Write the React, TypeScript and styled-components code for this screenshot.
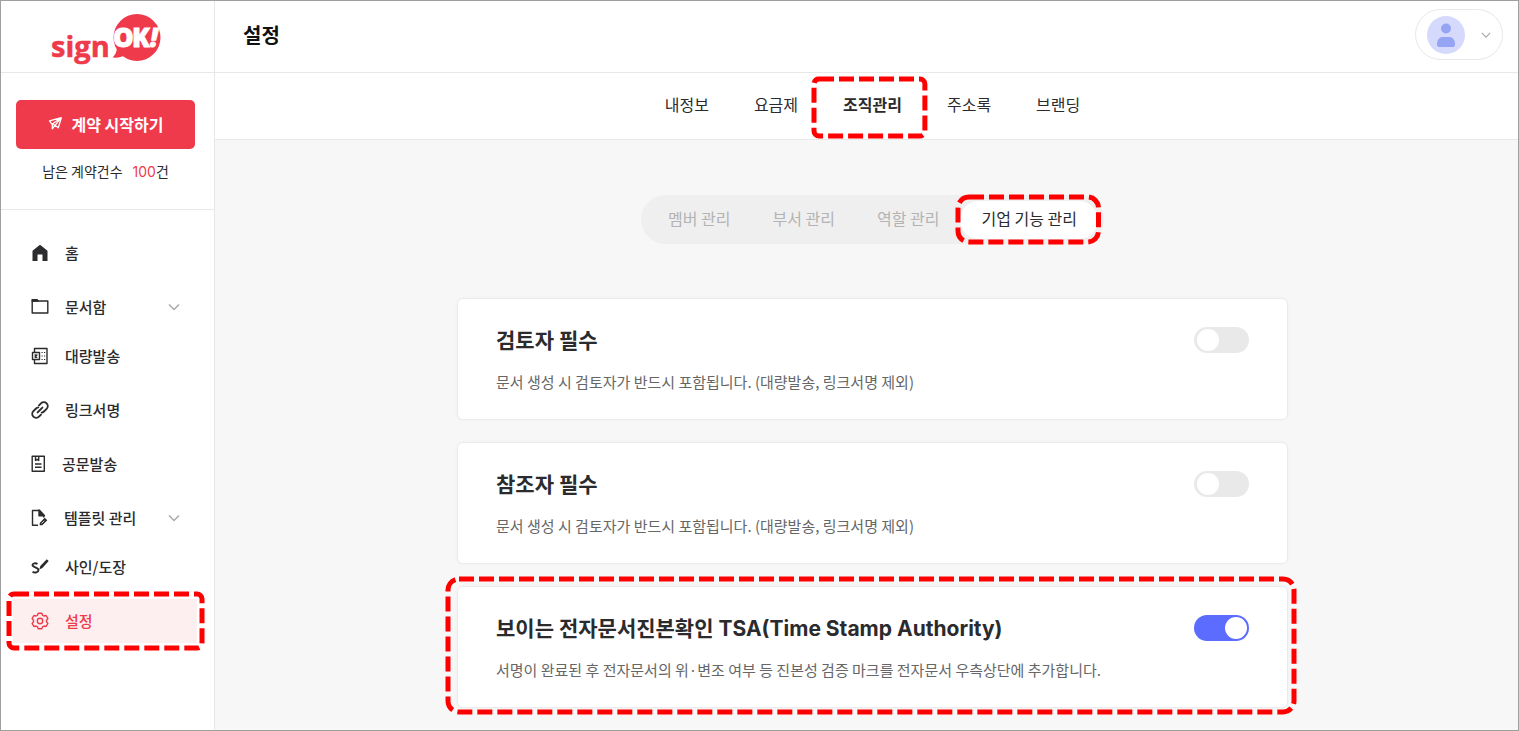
import React, { useState } from "react";
import styled, { createGlobalStyle, css } from "styled-components";

const RED = "#ef3a4b";
const INK = "#2b2b2d";
const LINE = "#e8e8e8";
const KR = '"Noto Sans CJK KR", "Noto Sans", sans-serif';
const MIXED = 'Inter, "Noto Sans CJK KR", sans-serif';

const GlobalStyle = createGlobalStyle`
  *, *::before, *::after { box-sizing: border-box; }
  body { margin: 0; font-family: ${KR}; font-size: 15px; color: ${INK}; background: #fff; }
  button, input { font-family: inherit; }
  button { border: 0; padding: 0; background: none; color: inherit; cursor: pointer; }
  a { color: inherit; text-decoration: none; }
  h1, h2, p, ul { margin: 0; padding: 0; }
  ul { list-style: none; }
  svg { display: block; }
`;

const Page = styled.div`
  display: flex;
  min-height: 100vh;
  border: 1px solid #9f9f9f;
  background: #fff;
`;

const Sidebar = styled.aside`
  flex: none;
  width: 214px;
  border-right: 1px solid ${LINE};
`;

const LogoLink = styled.a`
  display: flex;
  justify-content: center;
  align-items: center;
  height: 72px;
  padding: 2px 4px 0 0;
  border-bottom: 1px solid ${LINE};
`;

const StartPanel = styled.div`
  height: 137px;
  padding: 27px 19px 0 15px;
  border-bottom: 1px solid ${LINE};
`;

const StartButton = styled.button`
  display: flex;
  align-items: center;
  justify-content: center;
  gap: 9px;
  width: 100%;
  height: 49px;
  padding-bottom: 2px;
  border-radius: 5px;
  background: ${RED};
  color: #fff;
  font-size: 16px;
  line-height: 24px;
  font-weight: 700;
`;

const Remaining = styled.p`
  display: flex;
  justify-content: center;
  align-items: baseline;
  gap: 10px;
  margin-top: 12px;
  font-size: 14px;
  line-height: 20px;
`;

const Count = styled.span`
  font-family: ${MIXED};
  em { font-style: normal; color: ${RED}; }
`;

const Menu = styled.ul`
  display: flex;
  flex-direction: column;
  gap: 10px;
  padding: 21px 17px 0 12px;
`;

const MenuEntry = styled.li<{ $group?: boolean }>`
  position: relative;
  margin-bottom: ${(p) => (p.$group ? "-5px" : "0")};
`;

const MenuLink = styled.a<{ $active?: boolean }>`
  display: flex;
  align-items: center;
  gap: 16px;
  height: 44px;
  padding: 0 17px 0 18px;
  font-size: 15px;
  line-height: 22px;
  font-weight: 500;
  ${(p) => p.$active && css`background: #fdeff0; color: ${RED};`}
`;

const MenuText = styled.span`
  flex: 1;
`;

const Content = styled.div`
  flex: 1;
  min-width: 0;
  display: flex;
  flex-direction: column;
`;

const TopBar = styled.header`
  display: flex;
  align-items: center;
  justify-content: space-between;
  height: 72px;
  padding: 0 15px 4px 28px;
  border-bottom: 1px solid ${LINE};
`;

const PageTitle = styled.h1`
  font-size: 20px;
  line-height: 28px;
  font-weight: 700;
  color: #111;
`;

const Profile = styled.button`
  display: flex;
  align-items: center;
  justify-content: space-between;
  width: 88px;
  height: 51px;
  padding: 0 11px;
  border: 1px solid ${LINE};
  border-radius: 26px;
`;

const Tabs = styled.nav`
  display: flex;
  justify-content: center;
  align-items: center;
  gap: 45px;
  height: 67px;
  padding: 0 0 4px 12px;
  border-bottom: 1px solid ${LINE};
`;

const Tab = styled.a<{ $active?: boolean }>`
  position: relative;
  font-size: 16px;
  line-height: 24px;
  font-weight: ${(p) => (p.$active ? 700 : 400)};
`;

const Body = styled.main`
  flex: 1;
  display: flex;
  flex-direction: column;
  align-items: center;
  padding: 55px 18px 22px 30px;
  background: #f7f7f7;
`;

const Segments = styled.div`
  display: flex;
  align-items: center;
  height: 49px;
  padding: 0 6px;
  border-radius: 25px;
  background: #efefef;
`;

const Segment = styled.button<{ $active?: boolean }>`
  position: relative;
  height: 38px;
  padding: 0 21px 4px;
  border-radius: 19px;
  font-size: 16px;
  line-height: 24px;
  color: #b3b3b3;
  ${(p) => p.$active && css`background: #fff; color: ${INK};`}
`;

const Cards = styled.div`
  display: flex;
  flex-direction: column;
  gap: 22px;
  width: 100%;
  max-width: 831px;
  margin-top: 54px;
`;

const Card = styled.section`
  position: relative;
  display: flex;
  justify-content: space-between;
  align-items: flex-start;
  min-height: 122px;
  padding: 28px 38px 26px;
  border: 1px solid #ebebeb;
  border-radius: 6px;
  background: #fff;
  box-shadow: 0 0 4px rgba(0, 0, 0, 0.03);
`;

const CardTitle = styled.h2`
  font-family: ${MIXED};
  font-size: 21px;
  line-height: 28px;
  font-weight: 700;
  margin-bottom: 16px;
`;

const CardText = styled.p`
  font-size: 15px;
  line-height: 22px;
  color: #666;
`;

const Switch = styled.input`
  appearance: none;
  flex: none;
  display: flex;
  align-items: center;
  width: 55px;
  height: 26px;
  margin: 0;
  padding: 0 2px 0 3px;
  border-radius: 13px;
  background: #e9e9e9;
  cursor: pointer;
  &::before {
    content: "";
    width: 22px;
    height: 22px;
    border-radius: 50%;
    background: #fff;
  }
  &:checked { background: #5b6cff; justify-content: flex-end; }
`;

/* Dashed red frame drawn round the part that the guide points at. */
const FrameBox = styled.span<{ $inset: string }>`
  position: absolute;
  inset: ${(p) => p.$inset};
  pointer-events: none;
  svg { width: 100%; height: 100%; overflow: visible; }
  rect { width: 100%; height: 100%; fill: none; stroke: #fe0000; stroke-width: 5; stroke-dasharray: 15 5; }
`;

function Frame({ inset, radius }: { inset: string; radius: number }) {
  return (
    <FrameBox $inset={inset} aria-hidden="true">
      <svg><rect rx={radius} /></svg>
    </FrameBox>
  );
}

function Logo() {
  return (
    <svg width="112" height="56" viewBox="50 10 112 56" role="img" aria-label="signOK!">
      <circle cx="137" cy="37.5" r="23.5" fill={RED} />
      <path d="M117 46c0 5-1 8-4.500 11.500 6 .5 10-.5 14-3z" fill={RED} />
      <text x="51" y="57" fill={RED} stroke={RED} strokeWidth="0.500" fontFamily="Open Sans" fontWeight="700" fontSize="29">sign</text>
      <g fill="#fff" stroke="#fff" strokeWidth="0.800" fontFamily="Open Sans" fontWeight="800" fontSize="26">
        <text x="113" y="47">O</text>
        <text x="132" y="47">K</text>
        <text x="150" y="47" fontStyle="italic">!</text>
      </g>
    </svg>
  );
}

function Chevron({ size = 12 }: { size?: number }) {
  return (
    <svg width={size} height="8" viewBox="0 0 12 8" fill="none" stroke="#a9a9a9" strokeWidth="1.500" aria-hidden="true">
      <path d="M1 1.500l5 5 5-5" />
    </svg>
  );
}

function Plane() {
  return (
    <svg width="15" height="15" viewBox="0 0 15 15" fill="none" stroke="#fff" strokeWidth="1.300" strokeLinejoin="round" strokeLinecap="round" aria-hidden="true">
      <path d="M1.500 4.800L13.300 1.700 10.300 11.800 7 9.300 3.500 7.700zM13.300 1.700L4.300 8v4.800L7 9.300z" />
    </svg>
  );
}

type IconName = "home" | "folder" | "bulk" | "link" | "letter" | "template" | "sign" | "gear";

const ICONS: Record<IconName, { width: number; art: React.ReactNode }> = {
  home: {
    width: 18,
    art: <path d="M1.500 6.700L9 .8l7.500 5.900V17h-5v-6.500h-5V17h-5z" fill="currentColor" stroke="none" />,
  },
  folder: {
    width: 18,
    art: (
      <>
        <path d="M1.200 3h15.600v12H1.200z" />
        <path d="M.5 1h6L8.300 3.700H.5z" fill="currentColor" stroke="none" />
      </>
    ),
  },
  bulk: {
    width: 18,
    art: (
      <>
        <path d="M3.500 5V1.500h12.500v15H3.500V13" />
        <path d="M1.500 5.500h7v7h-7z" />
        <path d="M3.700 7.500l2.600 3M6.300 7.500l-2.600 3" />
        <path d="M10.500 5.500h1.200M13 5.500h1.200M10.500 9h1.200M13 9h1.200M10.500 12.500h1.200M13 12.500h1.200" strokeWidth="1.200" />
      </>
    ),
  },
  link: {
    width: 18,
    art: (
      <g strokeWidth="1.900" strokeLinecap="round">
        <path d="M8 4.300l2-2a3.900 3.900 0 0 1 5.600 0 3.900 3.900 0 0 1 0 5.500l-2.700 2.700a3.700 3.700 0 0 1-2.200 1.100" />
        <path d="M10 13.700l-2 2a3.900 3.900 0 0 1-5.600 0 3.900 3.900 0 0 1 0-5.500l2.700-2.700a3.700 3.700 0 0 1 2.200-1.100" />
        <path d="M6.600 11.400l4.800-4.800" />
      </g>
    ),
  },
  letter: {
    width: 15,
    art: (
      <>
        <path d="M1.200 1.200h12.100v15.100H1.200zM4.500 1.200v4.300l1.600-1.200 1.600 1.200V1.200" />
        <path d="M4 9h6.500M4 12.300h6.500" />
      </>
    ),
  },
  template: {
    width: 17,
    art: (
      <>
        <path d="M7 16.200H1.500V1.500h7L12.700 6v2.500" />
        <path d="M8 1l5.500 5.800H8z" fill="currentColor" />
        <path d="M8.700 13.900l5-5.200 2.600 2.500-5 5H8.700z" fill="currentColor" stroke="none" />
        <path d="M10.500 14.500l2.800-2.700" stroke="#fff" strokeWidth="0.800" />
      </>
    ),
  },
  sign: {
    width: 18,
    art: (
      <>
        <path d="M6.500 6C4.500 4.700 1.500 5.200 1.500 7.100c0 2.700 6 1.700 6 5 0 2.300-3.500 3.200-6 1.700" strokeWidth="1.900" />
        <path d="M8.300 11.500l1-3.600L15.800 1.200l1.900 1.700-6.300 7z" fill="currentColor" stroke="none" />
      </>
    ),
  },
  gear: {
    width: 18,
    art: (
      <>
        <path d="M7.200 1.200h3.600l.7 2 1.400.8 2.200-.5 1.800 3.100L15.500 8.200v1.600l1.400 1.600-1.800 3.100-2.200-.5-1.400.8-.7 2H7.200l-.7-2-1.400-.8-2.200.5-1.800-3.100 1.400-1.600V8.200L1.100 6.600l1.800-3.100 2.200.5 1.400-.8z" />
        <circle cx="9" cy="9" r="2.700" />
      </>
    ),
  },
};

function Icon({ name }: { name: IconName }) {
  const { width, art } = ICONS[name];
  return (
    <svg width={width} height="18" viewBox={`0 0 ${width} 18`} fill="none" stroke="currentColor" strokeWidth="1.400" strokeLinejoin="round" aria-hidden="true">
      {art}
    </svg>
  );
}

const MENU: { icon: IconName; label: string; group?: boolean; active?: boolean }[] = [
  { icon: "home", label: "홈" },
  { icon: "folder", label: "문서함", group: true },
  { icon: "bulk", label: "대량발송" },
  { icon: "link", label: "링크서명" },
  { icon: "letter", label: "공문발송" },
  { icon: "template", label: "템플릿 관리", group: true },
  { icon: "sign", label: "사인/도장" },
  { icon: "gear", label: "설정", active: true },
];

const TABS = ["내정보", "요금제", "조직관리", "주소록", "브랜딩"];
const SEGMENTS = ["멤버 관리", "부서 관리", "역할 관리", "기업 기능 관리"];

const FEATURES = [
  { id: "reviewer", title: "검토자 필수", text: "문서 생성 시 검토자가 반드시 포함됩니다. (대량발송, 링크서명 제외)", on: false },
  { id: "cc", title: "참조자 필수", text: "문서 생성 시 검토자가 반드시 포함됩니다. (대량발송, 링크서명 제외)", on: false },
  {
    id: "tsa",
    title: "보이는 전자문서진본확인 TSA(Time Stamp Authority)",
    text: "서명이 완료된 후 전자문서의 위·변조 여부 등 진본성 검증 마크를 전자문서 우측상단에 추가합니다.",
    on: true,
    framed: true,
  },
];

function FeatureCard({ id, title, text, on, framed }: { id: string; title: string; text: string; on: boolean; framed?: boolean }) {
  const [checked, setChecked] = useState(on);
  return (
    <Card>
      <div>
        <CardTitle><label htmlFor={id}>{title}</label></CardTitle>
        <CardText>{text}</CardText>
      </div>
      <Switch id={id} type="checkbox" role="switch" checked={checked} onChange={(e) => setChecked(e.target.checked)} />
      {framed && <Frame inset="-8px -7px -5px -10px" radius={11} />}
    </Card>
  );
}

export default function App() {
  return (
    <>
      <GlobalStyle />
      <Page>
        <Sidebar>
          <LogoLink href="#"><Logo /></LogoLink>
          <StartPanel>
            <StartButton type="button"><Plane />계약 시작하기</StartButton>
            <Remaining>
              <span>남은 계약건수</span>
              <Count><em>100</em>건</Count>
            </Remaining>
          </StartPanel>
          <Menu>
            {MENU.map((m) => (
              <MenuEntry key={m.label} $group={m.group}>
                <MenuLink href="#" $active={m.active}>
                  <Icon name={m.icon} />
                  <MenuText>{m.label}</MenuText>
                  {m.group && <Chevron />}
                </MenuLink>
                {m.active && <Frame inset="-5px -5px -5px -4px" radius={5} />}
              </MenuEntry>
            ))}
          </Menu>
        </Sidebar>
        <Content>
          <TopBar>
            <PageTitle>설정</PageTitle>
            <Profile type="button" aria-label="프로필">
              <svg width="38" height="38" viewBox="0 0 38 38" aria-hidden="true">
                <circle cx="19" cy="19" r="19" fill="#d5dafc" />
                <circle cx="19" cy="12.500" r="5" fill="#96a5f3" />
                <path d="M10 28.500c0-5 2.500-7.500 6-7.500h6c3.500 0 6 2.500 6 7.500 0 1.500-.8 2.500-2 2.500H12c-1.200 0-2-1-2-2.500z" fill="#96a5f3" />
              </svg>
              <Chevron size={10} />
            </Profile>
          </TopBar>
          <Tabs>
            {TABS.map((t) => (
              <Tab key={t} href="#" $active={t === "조직관리"}>
                {t}
                {t === "조직관리" && <Frame inset="-13px -23px -20px -29px" radius={5} />}
              </Tab>
            ))}
          </Tabs>
          <Body>
            <Segments>
              {SEGMENTS.map((s) => (
                <Segment key={s} type="button" $active={s === "기업 기능 관리"}>
                  {s}
                  {s === "기업 기능 관리" && <Frame inset="-4px -1px -3px -2px" radius={11} />}
                </Segment>
              ))}
            </Segments>
            <Cards>
              {FEATURES.map((f) => <FeatureCard key={f.id} {...f} />)}
            </Cards>
          </Body>
        </Content>
      </Page>
    </>
  );
}
